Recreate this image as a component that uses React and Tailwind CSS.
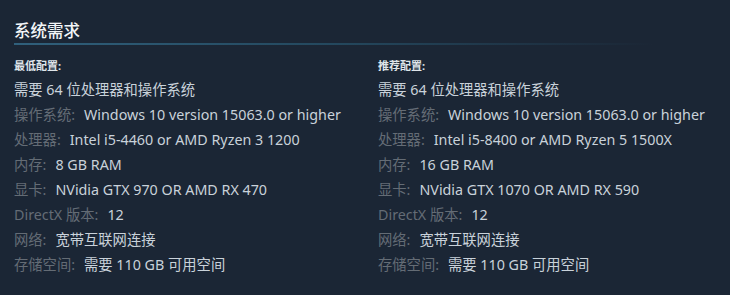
import React from 'react';

const minimum = [
  ['操作系统', 'Windows 10 version 15063.0 or higher'],
  ['处理器', 'Intel i5-4460 or AMD Ryzen 3 1200'],
  ['内存', '8 GB RAM'],
  ['显卡', 'NVidia GTX 970 OR AMD RX 470'],
  ['DirectX 版本', '12'],
  ['网络', '宽带互联网连接'],
  ['存储空间', '需要 110 GB 可用空间'],
];

const recommended = [
  ['操作系统', 'Windows 10 version 15063.0 or higher'],
  ['处理器', 'Intel i5-8400 or AMD Ryzen 5 1500X'],
  ['内存', '16 GB RAM'],
  ['显卡', 'NVidia GTX 1070 OR AMD RX 590'],
  ['DirectX 版本', '12'],
  ['网络', '宽带互联网连接'],
  ['存储空间', '需要 110 GB 可用空间'],
];

const Column = ({ title, rows }) => (
  <div className="w-[364px] shrink-0">
    <div className="h-[22px] text-[11px] font-bold leading-[22px] text-[#dfe5ea]">{title}:</div>
    <div className="h-[25px] leading-[25px] text-[#c9d2da]">需要 64 位处理器和操作系统</div>
    {rows.map(([label, value]) => (
      <div key={label} className="h-[25px] leading-[25px] whitespace-nowrap">
        <span className="text-[#646c75]">{label}:</span>
        <span className="ml-[9px] text-[#c9d2da]">{value}</span>
      </div>
    ))}
  </div>
);

export default function App() {
  return (
    <div
      className="w-[730px] h-[295px] overflow-hidden bg-[#1b2635] pl-[14px] pt-[22px] text-[14.3px]"
      style={{ fontFamily: '"Noto Sans", "Noto Sans CJK SC", sans-serif' }}
    >
      <div className="text-[16.5px] leading-[18px] font-medium text-[#f3f6f8]">系统需求</div>
      <div className="mt-[3px] h-[2px] w-[640px] bg-gradient-to-r from-[#30607c] via-[#24485e] to-transparent" />
      <div className="mt-[10px] flex">
        <Column title="最低配置" rows={minimum} />
        <Column title="推荐配置" rows={recommended} />
      </div>
    </div>
  );
}
